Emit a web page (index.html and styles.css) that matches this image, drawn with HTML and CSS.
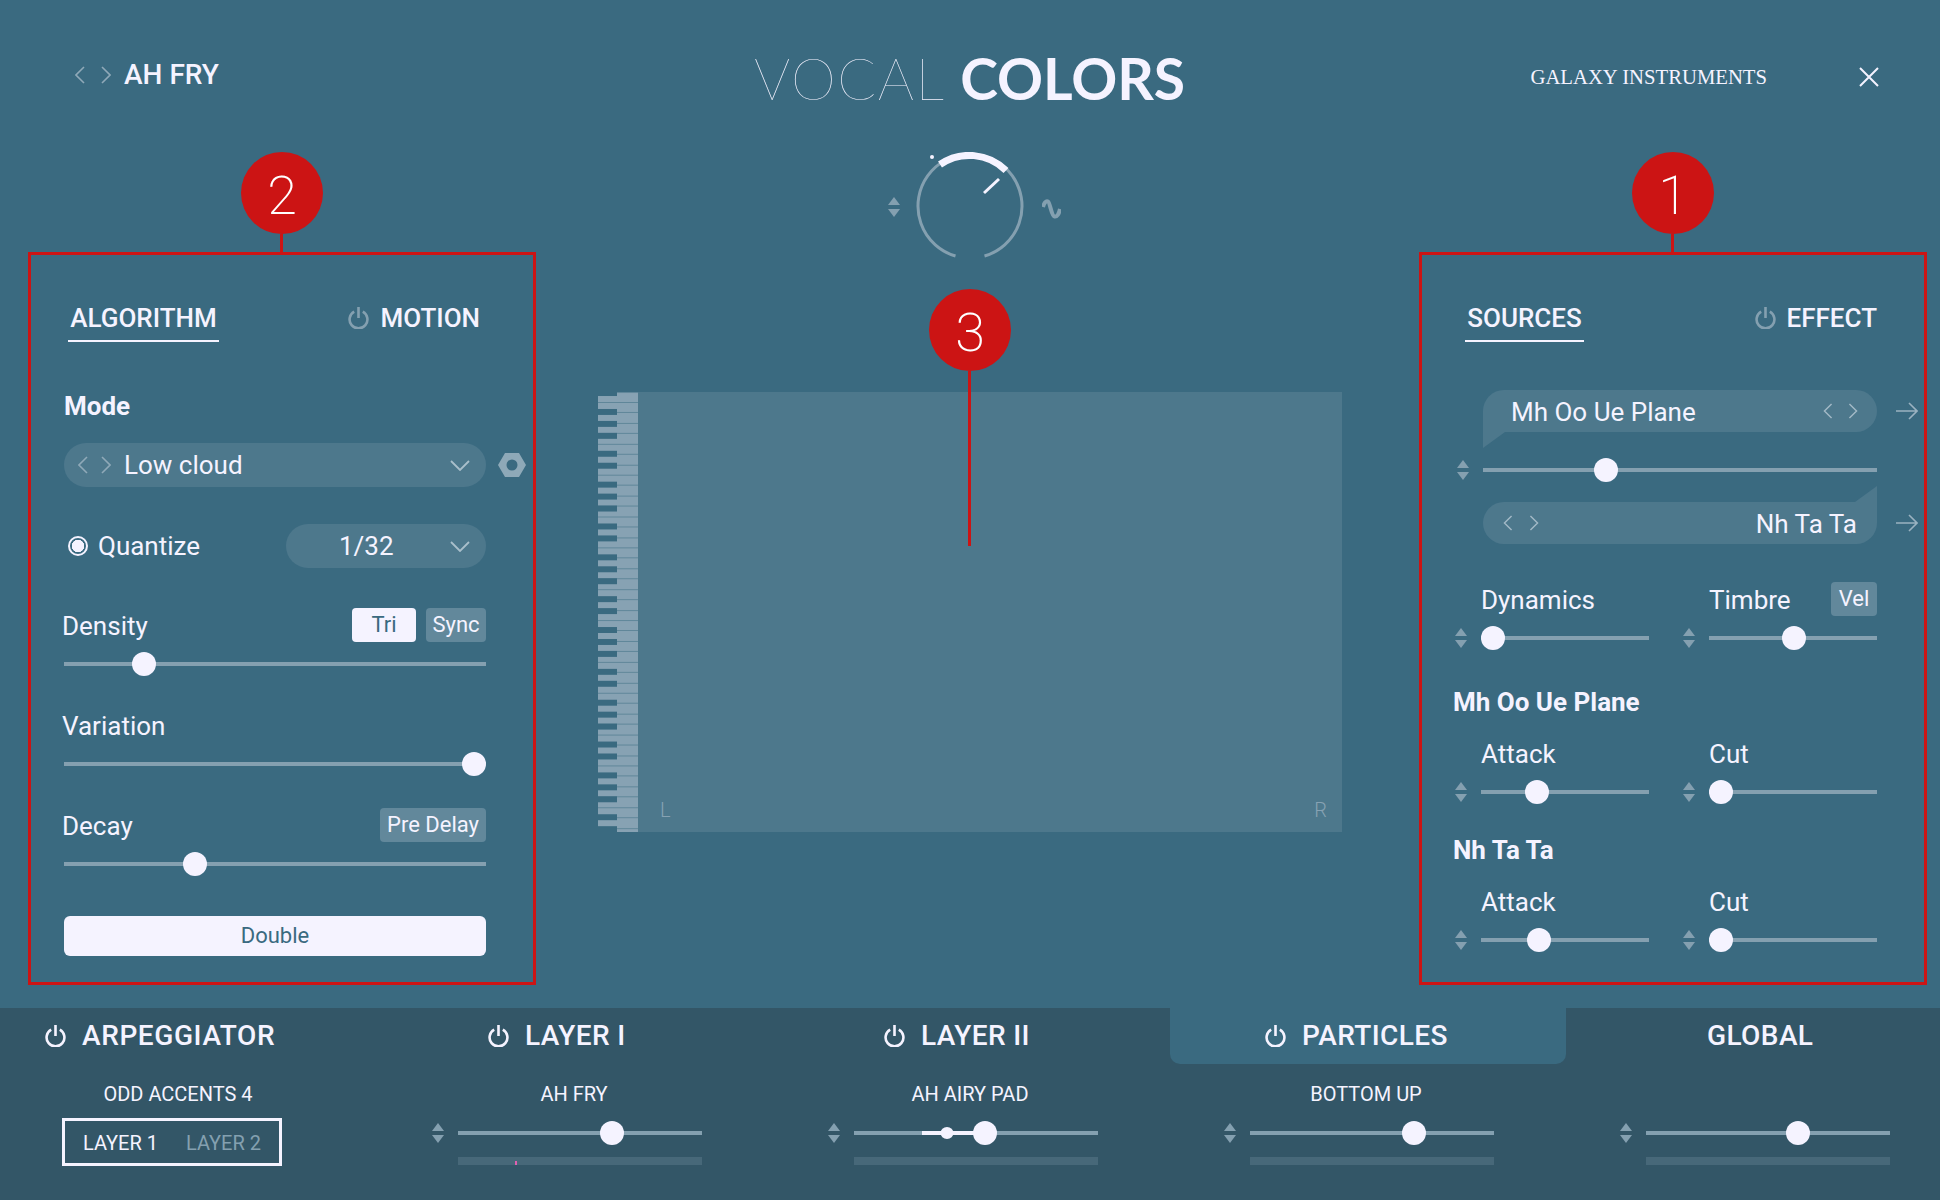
FILE: index.html
```html
<!DOCTYPE html>
<html lang="en">
<head>
    <meta charset="UTF-8">
    <meta name="viewport" content="width=device-width, initial-scale=1.0">
    <title>Vocal Colors</title>
    <link rel="stylesheet" href="styles.css">
</head>
<body>
    <svg class="defs" width="0" height="0">
        <symbol id="chev-l" viewBox="0 0 10 18"><path d="M9 1 1 9l8 8" fill="none" stroke="currentColor" stroke-width="1.6"/></symbol>
        <symbol id="chev-r" viewBox="0 0 10 18"><path d="M1 1l8 8-8 8" fill="none" stroke="currentColor" stroke-width="1.6"/></symbol>
        <symbol id="chev-d" viewBox="0 0 20 11"><path d="M1 1l9 9 9-9" fill="none" stroke="currentColor" stroke-width="1.8"/></symbol>
        <symbol id="power" viewBox="0 0 21 22"><path d="M6.200 4.700a8.900 8.900 0 1 0 8.600 0M10.500 0v11" fill="none" stroke="currentColor" stroke-width="2.600"/></symbol>
        <symbol id="updown" viewBox="0 0 12 20"><path d="M6 0l6 8H0zM0 12h12l-6 8z" fill="currentColor"/></symbol>
        <symbol id="arrow" viewBox="0 0 22 18"><path d="M0 9h21M13 1l8 8-8 8" fill="none" stroke="currentColor" stroke-width="1.6"/></symbol>
    </svg>

    <div class="app">
        <header class="top">
            <div class="preset">
                <svg class="chev"><use href="#chev-l"/></svg>
                <svg class="chev"><use href="#chev-r"/></svg>
                <span class="preset-name">AH FRY</span>
            </div>
            <div class="logo"><span class="logo-thin">VOCAL</span> <span class="logo-bold">COLORS</span></div>
            <div class="maker">GALAXY INSTRUMENTS</div>
            <svg class="close" viewBox="0 0 20 20"><path d="M1 1l18 18M19 1 1 19" fill="none" stroke="currentColor" stroke-width="2"/></svg>
        </header>

        <main class="main">
            <!-- algorithm -->
            <section class="panel panel-left">
                <div class="badge">2</div>
                <div class="tabs">
                    <div class="tab tab-on tab-algo">ALGORITHM</div>
                    <div class="tab tab-motion"><svg class="power"><use href="#power"/></svg>MOTION</div>
                </div>
                <div class="title title-mode">Mode</div>
                <div class="combo combo-mode">
                    <svg class="chev"><use href="#chev-l"/></svg>
                    <svg class="chev"><use href="#chev-r"/></svg>
                    <span class="combo-text">Low cloud</span>
                    <svg class="chev-down"><use href="#chev-d"/></svg>
                    <svg class="nut" viewBox="0 0 28 24"><path fill-rule="evenodd" d="M7 0h14l7 12-7 12H7L0 12zM14 6.500a5.500 5.500 0 1 0 0 11 5.500 5.500 0 0 0 0-11z"/></svg>
                </div>
                <div class="quantize">
                    <div class="radio"></div>
                    <span class="quantize-label">Quantize</span>
                    <div class="combo combo-small">
                        <span class="combo-value">1/32</span>
                        <svg class="chev-down"><use href="#chev-d"/></svg>
                    </div>
                </div>
                <div class="field field-first">
                    <div class="field-head">
                        <span>Density</span>
                        <div class="btns">
                            <div class="btn btn-on btn-tri">Tri</div>
                            <div class="btn btn-sync">Sync</div>
                        </div>
                    </div>
                    <div class="slider"><div class="thumb" style="left:19%"></div></div>
                </div>
                <div class="field">
                    <div class="field-head"><span>Variation</span></div>
                    <div class="slider"><div class="thumb" style="left:97.2%"></div></div>
                </div>
                <div class="field">
                    <div class="field-head">
                        <span>Decay</span>
                        <div class="btn btn-delay">Pre Delay</div>
                    </div>
                    <div class="slider"><div class="thumb" style="left:31%"></div></div>
                </div>
                <div class="double">Double</div>
            </section>

            <!-- knob + pad -->
            <section class="stage">
                <div class="badge badge-3">3</div>
                <div class="knob-row">
                    <svg class="updown"><use href="#updown"/></svg>
                    <svg class="knob" viewBox="0 0 108 108">
                        <path d="M39.500 104A52 52 0 1 1 68.500 104" fill="none" stroke="#84a0b0" stroke-width="3"/>
                        <path d="M24 12.500A52 52 0 0 1 90 18.500" fill="none" stroke="#f5f3ff" stroke-width="7"/>
                        <path d="M83 27 68 41" stroke="#f5f3ff" stroke-width="3"/>
                        <circle cx="16" cy="5" r="2" fill="#f5f3ff"/>
                    </svg>
                    <svg class="wave" viewBox="0 0 19 20"><path d="M1 8C2 4 4 1.500 6 2.500 8 3.500 9.500 17 12.500 17.500 15 18 17 15 18 10" fill="none" stroke="currentColor" stroke-width="4"/></svg>
                </div>
                <div class="pad">
                    <div class="keys"></div>
                    <div class="pad-area">
                        <span>L</span>
                        <span>R</span>
                    </div>
                </div>
            </section>

            <!-- sources -->
            <section class="panel panel-right">
                <div class="badge">1</div>
                <div class="tabs">
                    <div class="tab tab-on tab-sources">SOURCES</div>
                    <div class="tab"><svg class="power"><use href="#power"/></svg>EFFECT</div>
                </div>
                <div class="source source-a">
                    <div class="bubble bubble-a">
                        <span class="combo-text">Mh Oo Ue Plane</span>
                        <svg class="chev chev-first"><use href="#chev-l"/></svg>
                        <svg class="chev"><use href="#chev-r"/></svg>
                    </div>
                    <svg class="arrow"><use href="#arrow"/></svg>
                </div>
                <div class="mix">
                    <svg class="updown"><use href="#updown"/></svg>
                    <div class="slider"><div class="thumb" style="left:31.2%"></div></div>
                </div>
                <div class="source source-b">
                    <div class="bubble bubble-b">
                        <svg class="chev"><use href="#chev-l"/></svg>
                        <svg class="chev"><use href="#chev-r"/></svg>
                        <span class="combo-text bubble-right">Nh Ta Ta</span>
                    </div>
                    <svg class="arrow"><use href="#arrow"/></svg>
                </div>

                <div class="duo duo-top">
                    <div class="cell">
                        <div class="field-head cell-head"><span>Dynamics</span></div>
                        <div class="cell-row"><svg class="updown"><use href="#updown"/></svg><div class="slider"><div class="thumb" style="left:7.1%"></div></div></div>
                    </div>
                    <div class="cell">
                        <div class="field-head cell-head"><span>Timbre</span><div class="btn btn-vel">Vel</div></div>
                        <div class="cell-row"><svg class="updown"><use href="#updown"/></svg><div class="slider"><div class="thumb" style="left:50.6%"></div></div></div>
                    </div>
                </div>
                <div class="title title-a">Mh Oo Ue Plane</div>
                <div class="duo">
                    <div class="cell">
                        <div class="field-head cell-head"><span>Attack</span></div>
                        <div class="cell-row"><svg class="updown"><use href="#updown"/></svg><div class="slider"><div class="thumb" style="left:33.3%"></div></div></div>
                    </div>
                    <div class="cell">
                        <div class="field-head cell-head"><span>Cut</span></div>
                        <div class="cell-row"><svg class="updown"><use href="#updown"/></svg><div class="slider"><div class="thumb" style="left:7.1%"></div></div></div>
                    </div>
                </div>
                <div class="title title-b">Nh Ta Ta</div>
                <div class="duo">
                    <div class="cell">
                        <div class="field-head cell-head"><span>Attack</span></div>
                        <div class="cell-row"><svg class="updown"><use href="#updown"/></svg><div class="slider"><div class="thumb" style="left:34.5%"></div></div></div>
                    </div>
                    <div class="cell">
                        <div class="field-head cell-head"><span>Cut</span></div>
                        <div class="cell-row"><svg class="updown"><use href="#updown"/></svg><div class="slider"><div class="thumb" style="left:7.1%"></div></div></div>
                    </div>
                </div>
            </section>
        </main>

        <footer class="strip">
            <div class="module">
                <div class="mod-tab mod-arp"><svg class="power"><use href="#power"/></svg>ARPEGGIATOR</div>
                <div class="mod-name mod-name-arp">ODD ACCENTS 4</div>
                <div class="layers"><span>LAYER 1</span><span class="layer-off">LAYER 2</span></div>
            </div>
            <div class="module">
                <div class="mod-tab mod-layer"><svg class="power"><use href="#power"/></svg>LAYER I</div>
                <div class="mod-name">AH FRY</div>
                <div class="mod-ctl"><svg class="updown"><use href="#updown"/></svg><div class="slider"><div class="thumb" style="left:63.1%"></div></div></div>
                <div class="meter"><div class="meter-tick" style="left:23.4%"></div></div>
            </div>
            <div class="module">
                <div class="mod-tab mod-layer"><svg class="power"><use href="#power"/></svg>LAYER II</div>
                <div class="mod-name">AH AIRY PAD</div>
                <div class="mod-ctl">
                    <svg class="updown"><use href="#updown"/></svg>
                    <div class="slider">
                        <div class="range" style="left:27.9%;width:25.8%"></div>
                        <div class="thumb thumb-small" style="left:38.100%"></div>
                        <div class="thumb" style="left:53.7%"></div>
                    </div>
                </div>
                <div class="meter"></div>
            </div>
            <div class="module">
                <div class="mod-tab mod-active"><svg class="power"><use href="#power"/></svg>PARTICLES</div>
                <div class="mod-name">BOTTOM UP</div>
                <div class="mod-ctl"><svg class="updown"><use href="#updown"/></svg><div class="slider"><div class="thumb" style="left:67.4%"></div></div></div>
                <div class="meter"></div>
            </div>
            <div class="module">
                <div class="mod-tab mod-global">GLOBAL</div>
                <div class="mod-name">&nbsp;</div>
                <div class="mod-ctl"><svg class="updown"><use href="#updown"/></svg><div class="slider"><div class="thumb" style="left:62.3%"></div></div></div>
                <div class="meter"></div>
            </div>
        </footer>
    </div>
</body>
</html>
```

FILE: styles.css
```css
body{
    margin: 0;
    background-color: #3a6a80;
    color: #f5f3ff;
    font-family: Roboto, "Liberation Sans", sans-serif;
    font-size: 26px;
    font-weight: 400;
    line-height: 30px;
}
.defs{
    position: absolute;
}
.app{
    width: 1940px;
    height: 1200px;
    overflow: hidden;
    display: flex;
    flex-direction: column;
}

/* header */
.top{
    height: 130px;
    box-sizing: border-box;
    padding: 24px 61px 0 75px;
    display: grid;
    grid-template-columns: 679px 430px 1fr auto;
    align-items: center;
}
.preset{
    display: flex;
    align-items: center;
    margin-top: -4px;
}
.preset .chev{
    margin-right: 16px;
}
.preset-name{
    font-size: 28px;
    font-weight: 500;
    margin-left: -3px;
}
.logo{
    font-family: Lato, sans-serif;
    font-size: 57px;
    line-height: 60px;
    white-space: nowrap;
    padding-top: 2px;
}
.logo-thin{
    font-weight: 100;
    letter-spacing: 1.500px;
}
.logo-bold{
    font-weight: 700;
}
.maker{
    justify-self: end;
    margin-right: 92px;
    font-family: "Liberation Serif", serif;
    font-size: 20.700px;
}
.close{
    width: 20px;
    height: 20px;
}

/* shared icons */
.chev{
    width: 10px;
    height: 18px;
    color: #8fa9b8;
    flex: none;
}
.chev-down{
    width: 20px;
    height: 11px;
    color: #a9bfcb;
    margin-left: auto;
}
.power{
    width: 21px;
    height: 22px;
    color: #84a0b0;
    margin-right: 11px;
}
.updown{
    width: 12px;
    height: 20px;
    color: #84a0b0;
    flex: none;
}

/* main area */
.main{
    height: 878px;
    padding: 0 13px 0 28px;
    display: grid;
    grid-template-columns: 508px 1fr 508px;
}
.panel{
    position: relative;
    margin: 122px 0 23px;
    padding-top: 48px;
    box-sizing: border-box;
    border: 3px solid #cc1414;
}
.panel-left{
    padding-left: 33px;
    padding-right: 47px;
}
.panel-right{
    padding-left: 32px;
    padding-right: 47px;
}
.badge{
    position: absolute;
    top: -103px;
    left: 50%;
    margin-left: -41px;
    width: 82px;
    height: 82px;
    border-radius: 50%;
    background-color: #cc1414;
    color: #fff;
    font-size: 54px;
    font-weight: 200;
    line-height: 87px;
    text-align: center;
}
.badge::after{
    content: "";
    position: absolute;
    top: 82px;
    left: 39px;
    width: 3px;
    height: 18px;
    background-color: #cc1414;
}
.badge-3{
    top: 159px;
    z-index: 2;
}
.badge-3::after{
    height: 175px;
}

/* tabs */
.tabs{
    display: flex;
    justify-content: space-between;
    align-items: flex-start;
}
.tab{
    display: flex;
    align-items: center;
    height: 30px;
    font-weight: 500;
}
.tab-on{
    padding-bottom: 7px;
    border-bottom: 2px solid #f5f3ff;
    justify-content: center;
}
.tab-algo{
    width: 151px;
    margin-left: 4px;
}
.tab-motion{
    margin-right: 6px;
}
.tab-sources{
    width: 119px;
    margin-left: 11px;
}

.title{
    font-weight: 700;
}
.title-mode{
    margin-top: 49px;
}
.title-a{
    margin: 37px 0 -1px -1px;
}
.title-b{
    margin: 31px 0 -1px -1px;
}

/* combos */
.combo{
    height: 44px;
    border-radius: 22px;
    background-color: #4d788c;
    display: flex;
    align-items: center;
    position: relative;
    padding-right: 16px;
}
.combo-mode{
    margin-top: 22px;
    padding-left: 14px;
}
.combo-mode .chev{
    margin-right: 13px;
}
.combo-text{
    white-space: nowrap;
}
.nut{
    position: absolute;
    right: -40px;
    top: 10px;
    width: 28px;
    height: 24px;
    fill: #8ea9b8;
}
.quantize{
    margin-top: 37px;
    display: flex;
    align-items: center;
    padding-left: 4px;
}
.radio{
    width: 20px;
    height: 20px;
    box-sizing: border-box;
    border: 2px solid #f5f3ff;
    border-radius: 50%;
    background: radial-gradient(circle, #f5f3ff 6px, transparent 6.500px);
}
.quantize-label{
    margin-left: 10px;
}
.combo-small{
    width: 200px;
    box-sizing: border-box;
    margin-left: auto;
}
.combo-value{
    margin-left: 53px;
}

/* slider rows */
.field{
    margin-top: 32px;
}
.field-first{
    margin-top: 40px;
}
.field-head{
    height: 34px;
    display: flex;
    justify-content: space-between;
    align-items: center;
    margin-bottom: 10px;
}
.field > .field-head > span{
    margin: 2px 0 0 -2px;
}
.btns{
    display: flex;
    gap: 10px;
}
.btn{
    height: 34px;
    border-radius: 4px;
    background-color: #62889b;
    font-size: 22px;
    line-height: 34px;
    text-align: center;
}
.btn-on{
    background-color: #f5f3ff;
    color: #3a6a80;
}
.btn-tri{
    width: 64px;
}
.btn-sync{
    width: 60px;
}
.btn-delay{
    width: 106px;
}
.btn-vel{
    width: 46px;
}
.slider{
    position: relative;
    height: 24px;
    flex: 1;
}
.slider::before{
    content: "";
    position: absolute;
    top: 10px;
    left: 0;
    right: 0;
    height: 4px;
    background-color: #84a0b0;
}
.thumb{
    position: absolute;
    top: 0;
    width: 24px;
    height: 24px;
    border-radius: 50%;
    background-color: #f5f3ff;
    transform: translateX(-50%);
}
.thumb-small{
    top: 6px;
    width: 13px;
    height: 12px;
}
.range{
    position: absolute;
    top: 10px;
    height: 4px;
    background-color: #f5f3ff;
}
.double{
    margin-top: 40px;
    height: 40px;
    border-radius: 6px;
    background-color: #f5f3ff;
    color: #3a6a80;
    font-size: 22px;
    line-height: 40px;
    text-align: center;
}

/* center */
.stage{
    position: relative;
    width: 744px;
    margin-left: 62px;
    padding-top: 23px;
}
.knob-row{
    height: 106px;
    padding-left: 8px;
    display: flex;
    justify-content: center;
    align-items: center;
}
.knob{
    width: 108px;
    height: 108px;
    margin: 0 18px 0 16px;
    flex: none;
}
.knob-row .updown{
    margin-top: 2px;
}
.wave{
    width: 19px;
    height: 20px;
    margin-top: 6px;
    color: #84a0b0;
}
.pad{
    margin-top: 133px;
    height: 440px;
    display: flex;
    background-color: #4d788c;
}
.keys{
    width: 40px;
    flex: none;
    background-color: #87a2b3;
    background-image:
        linear-gradient(to bottom,
            transparent 7px, #3a6a80 7px, #3a6a80 13px,
            transparent 13px, transparent 19px, #3a6a80 19px, #3a6a80 25px,
            transparent 25px, transparent 31px, #3a6a80 31px, #3a6a80 37px,
            transparent 37px, transparent 49px, #3a6a80 49px, #3a6a80 55px,
            transparent 55px, transparent 61px, #3a6a80 61px, #3a6a80 67px,
            transparent 67px),
        linear-gradient(to bottom,
            #5f8699 1px, transparent 1px,
            transparent 10.400px, #5f8699 10.400px, #5f8699 11.400px,
            transparent 11.400px, transparent 20.800px, #5f8699 20.800px, #5f8699 21.800px,
            transparent 21.800px, transparent 31.200px, #5f8699 31.200px, #5f8699 32.200px,
            transparent 32.200px, transparent 41.600px, #5f8699 41.600px, #5f8699 42.600px,
            transparent 42.600px, transparent 52px, #5f8699 52px, #5f8699 53px,
            transparent 53px, transparent 62.300px, #5f8699 62.300px, #5f8699 63.300px,
            transparent 63.300px);
    background-size: 19px 72.700px, 100% 72.700px;
    background-position: 0 10px, 0 10px;
    background-repeat: repeat-y;
}
.pad-area{
    flex: 1;
    display: flex;
    justify-content: space-between;
    align-items: flex-end;
    padding: 0 15px 10px 22px;
    color: #87a2b3;
    font-size: 20px;
    font-weight: 300;
    line-height: 24px;
}

/* sources */
.source{
    display: flex;
    align-items: center;
    gap: 19px;
    margin-left: 29px;
}
.source-a{
    margin-top: 48px;
}
.source-b{
    margin-top: 20px;
}
.bubble{
    position: relative;
    width: 394px;
    height: 42px;
    flex: none;
    box-sizing: border-box;
    display: flex;
    align-items: center;
    background-color: #4d788c;
}
.bubble::after{
    content: "";
    position: absolute;
    background-color: #4d788c;
    width: 22px;
    height: 16px;
}
.bubble-a{
    border-radius: 21px 21px 21px 0;
    padding: 0 19px 0 28px;
}
.bubble-a::after{
    left: 0;
    top: 42px;
    clip-path: polygon(0 0, 100% 0, 0 100%);
}
.bubble-b{
    border-radius: 21px 0 21px 21px;
    padding: 0 20px 0 20px;
}
.bubble-b::after{
    right: 0;
    top: -16px;
    clip-path: polygon(100% 0, 100% 100%, 0 100%);
}
.bubble .combo-text{
    margin-top: 2px;
}
.bubble .chev{
    height: 16px;
    margin-right: 16px;
    color: #a3b9c6;
}
.bubble-a .chev{
    margin: 0;
}
.bubble-a .chev-first{
    margin: 0 15px 0 auto;
}
.bubble-right{
    margin-left: auto;
}
.arrow{
    width: 22px;
    height: 18px;
    color: #9ab2c0;
    flex: none;
}
.mix{
    margin: 26px 0 0 3px;
    display: flex;
    align-items: center;
    gap: 14px;
}
.duo{
    margin-top: 20px;
    padding-left: 1px;
    display: grid;
    grid-template-columns: 1fr 1fr;
    gap: 34px;
}
.duo-top{
    margin-top: 38px;
}
.cell-head{
    padding-left: 26px;
}
.cell-head span{
    margin-top: 2px;
}
.cell-row{
    display: flex;
    align-items: center;
    gap: 14px;
}

/* bottom strip */
.strip{
    flex: 1;
    display: grid;
    grid-template-columns: 378px repeat(3, 396px) 1fr;
    background-color: #335667;
}
.mod-tab{
    height: 56px;
    box-sizing: border-box;
    display: flex;
    align-items: center;
    font-size: 28px;
    letter-spacing: .4px;
    font-weight: 500;
}
.mod-tab .power{
    color: #f5f3ff;
    margin-right: 16px;
}
.mod-arp{
    padding-left: 45px;
    letter-spacing: .6px;
}
.mod-layer{
    padding-left: 110px;
}
.mod-active{
    padding-left: 95px;
    background-color: #3a6a80;
    border-radius: 0 0 10px 10px;
}
.mod-global{
    padding-left: 141px;
}
.mod-name{
    width: 392px;
    margin-top: 18px;
    font-size: 20px;
    line-height: 24px;
    text-align: center;
}
.mod-name-arp{
    width: 356px;
}
.mod-ctl{
    width: 270px;
    margin: 15px 0 12px 54px;
    display: flex;
    align-items: center;
    gap: 14px;
}
.meter{
    position: relative;
    width: 244px;
    height: 8px;
    margin-left: 80px;
    background-color: #476879;
}
.meter-tick{
    position: absolute;
    bottom: 0;
    width: 2px;
    height: 4px;
    background-color: #e060b0;
}
.layers{
    width: 220px;
    height: 48px;
    box-sizing: border-box;
    margin: 12px 0 0 62px;
    border: 3px solid #f5f3ff;
    display: flex;
    align-items: center;
    justify-content: center;
    gap: 28px;
    font-size: 20px;
    padding-top: 2px;
}
.layer-off{
    color: #84a0b0;
}
```
